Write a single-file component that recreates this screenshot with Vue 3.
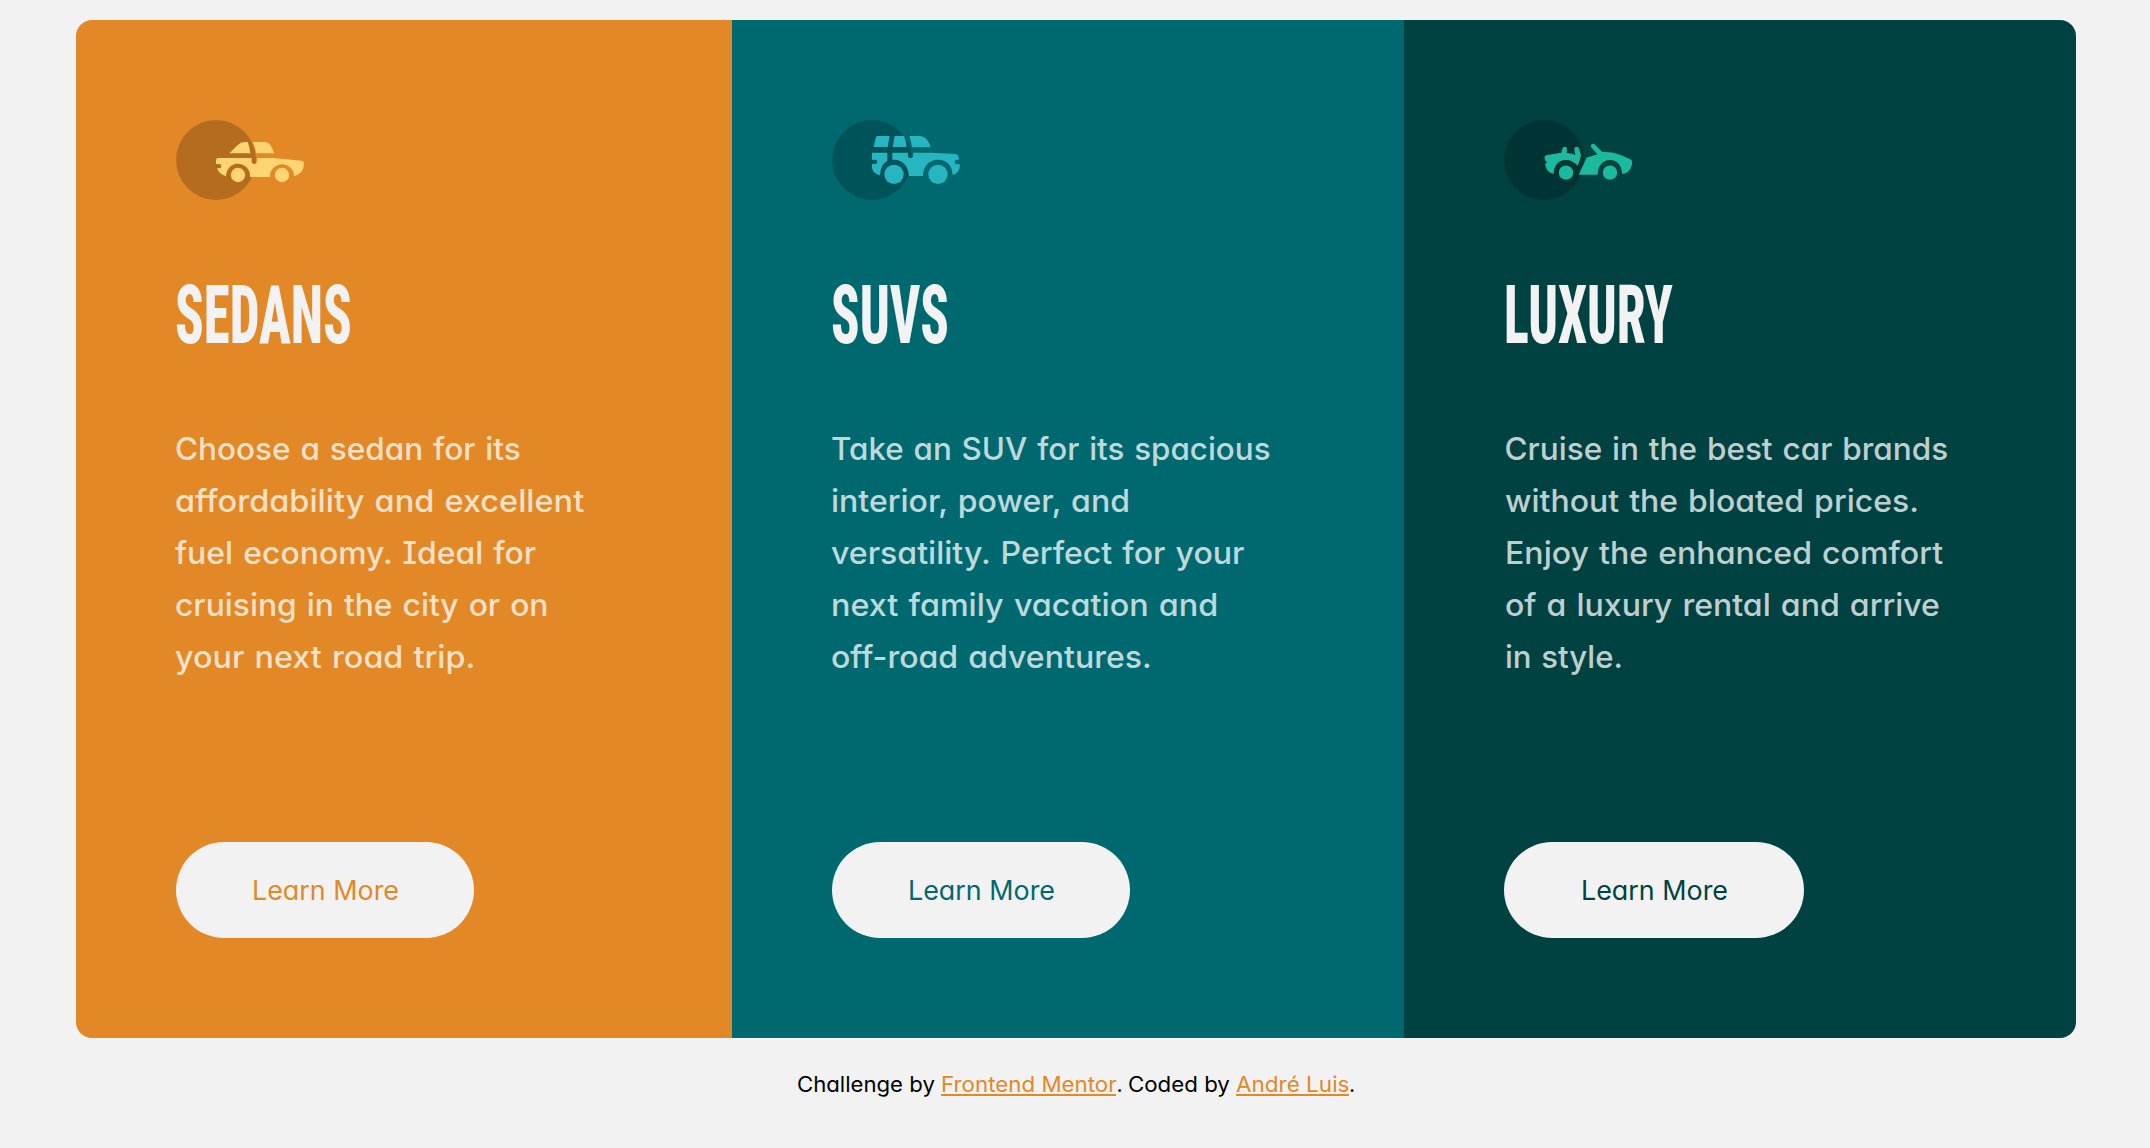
<script setup>
const cards = [
  {
    id: 'sedans',
    title: 'SEDANS',
    titleWidth: 177,
    view: '48 30 384 240',
    circle: 168,
    shapes: [
      'M208 130L234 104Q242 96 254 96H263Q269 110 271 130Z',
      'M278 96H312Q326 96 333 108L343 130H288Q286 110 278 96Z',
      'M174 144H275V154Q275 162 283 162Q291 162 291 154V144H340L425 152Q432 153 432 158Q432 190 402 199A36 36 0 0 0 330 199V201H270V195A36 36 0 0 0 198 199Q178 194 171 175H178Q184 174 184 168.500Q184 162 178 162H168V152Q168 144 174 144Z',
    ],
    wheels: [[234, 195, 21.5], [366, 195, 21.5]],
    lines: [
      ['Choose a sedan for its', 346],
      ['affordability and excellent', 409.5],
      ['fuel economy. Ideal for', 361],
      ['cruising in the city or on', 373.5],
      ['your next road trip.', 300.5],
    ],
  },
  {
    id: 'suvs',
    title: 'SUVS',
    titleWidth: 118,
    view: '36 30 384 240',
    circle: 156,
    shapes: [
      'M174 78H209L203 111H161L167 84Q169 78 174 78Z',
      'M224 78H252Q258 92 260 111H218Z',
      'M268 78H298Q314 78 323 92Q330 102 332 112H276Q273 92 268 78Z',
      'M156 128H202V153Q182 162 180 196Q160 192 156 174V162H166Q172 160 172 155.500Q172 149 166 149H156Z',
      'M217 128H264V137Q264 144 271 144Q279 144 279 137V128H333L408 132Q416 133 417 149H411Q404 150 404 156Q404 163 411 163H420Q420 190 398 195C397 166 380 149 354 149C328 149 309 168 309 198H267C265 168 248 149 222 149H217Z',
    ],
    wheels: [[222, 193, 29], [354, 193, 29]],
    lines: [
      ['Take an SUV for its spacious', 440],
      ['interior, power, and', 299],
      ['versatility. Perfect for your', 413.5],
      ['next family vacation and', 387],
      ['off-road adventures.', 320.5],
    ],
  },
  {
    id: 'luxury',
    title: 'LUXURY',
    titleWidth: 169,
    view: '42 30 384 240',
    circle: 162,
    shapes: [
      'M168 136L214 128L217 116Q219 110 224 110Q231 110 231 117L230 129Q243 130 256 134L253 118Q253 110 260 110Q267 110 268 118L273 136L270 148L263 167Q248 150 228 150C205 150 191 168 191 192Q169 187 165 162L171 157L165 151Q161 139 168 136Z',
      'M303 111C301 104 306 101 311 101Q315 102 318 107L337 126Q370 125 394 136L424 149Q428 156 425 167Q419 189 396 192C397 168 382 150 360 150C338 150 323 169 323 194H266L289 145Q291 141 296 141L322 133Z',
    ],
    wheels: [[228, 188, 21.5], [360, 188, 21.5]],
    lines: [
      ['Cruise in the best car brands', 444],
      ['without the bloated prices.', 414],
      ['Enjoy the enhanced comfort', 438],
      ['of a luxury rental and arrive', 434.5],
      ['in style.', 117.5],
    ],
  },
]

// Stretches or condenses a run of text to the given width.
const vFit = {
  mounted(el, { value }) {
    el.style.transform = `scaleX(${value / el.offsetWidth})`
    el.style.marginRight = `${value - el.offsetWidth}px`
  },
}
</script>

<template>
  <div class="page">
    <main class="cards">
      <section v-for="card in cards" :key="card.id" class="card" :class="card.id">
        <svg class="icon" :viewBox="card.view" aria-hidden="true">
          <circle class="halo" :cx="card.circle" cy="150" r="120" />
          <path v-for="d in card.shapes" :key="d" :d="d" />
          <circle v-for="w in card.wheels" :key="w[0]" :cx="w[0]" :cy="w[1]" :r="w[2]" />
        </svg>
        <h2><span v-fit="card.titleWidth" class="fit">{{ card.title }}</span></h2>
        <p>
          <span v-for="line in card.lines" :key="line[0]" class="line">
            <span v-fit="line[1]" class="fit">{{ line[0] }}</span>
          </span>
        </p>
        <a class="button"><span v-fit="147" class="fit">Learn More</span></a>
      </section>
    </main>
    <footer>
      <span v-fit="138" class="fit">Challenge by</span>
      <a class="first"><span v-fit="175.5" class="fit">Frontend Mentor</span></a>
      <span v-fit="6" class="fit">.</span>
      <span v-fit="101.5" class="fit coded">Coded by</span>
      <a class="second"><span v-fit="113" class="fit">André Luis</span></a>
      <span v-fit="6" class="fit">.</span>
    </footer>
  </div>
</template>

<style>
body {
  background: #f2f2f2;
}
</style>

<style scoped>
.page {
  box-sizing: border-box;
  height: 1148px;
  padding: 20px 74px 0 76px;
  background: #f2f2f2;
  font-family: Inter, "Noto Sans", sans-serif;
  font-feature-settings: "cv11", "cv08";
  overflow: hidden;
}
.cards {
  display: grid;
  grid-template-columns: 656px 672px 672px;
  height: 1018px;
  border-radius: 16px;
  overflow: hidden;
}
.card {
  box-sizing: border-box;
  display: flex;
  flex-direction: column;
  align-items: flex-start;
  padding: 100px;
}
.sedans { background: #e28826; color: #e28826; }
.suvs { background: #006970; color: #006970; }
.luxury { background: #004241; color: #004241; }
.icon {
  display: block;
  width: 128px;
  height: 80px;
}
.sedans .icon { fill: #ffd473; }
.suvs .icon { fill: #26b5c1; }
.luxury .icon { fill: #1bb99e; }
.icon .halo {
  fill: #000;
  fill-opacity: 0.2;
}
.fit {
  display: inline-block;
  transform-origin: 0 50%;
  white-space: nowrap;
}
h2 {
  margin: 67px 0 0 -1px;
  height: 96px;
  color: #f2f2f2;
  font-family: Roboto, sans-serif;
  font-size: 81.5px;
  font-weight: 800;
  font-stretch: 75%;
  line-height: 96px;
}
.luxury h2 { margin-left: 0; }
p {
  margin: 60px 0 0 -1px;
  color: rgba(255, 255, 255, 0.75);
  font-size: 31.5px;
  font-weight: 450;
  line-height: 52px;
  word-spacing: 1.5px;
}
.luxury p { margin-left: 0.5px; }
.line {
  display: block;
  height: 52px;
}
.button {
  box-sizing: border-box;
  display: flex;
  justify-content: center;
  width: 298px;
  height: 96px;
  margin-top: auto;
  border-radius: 48px;
  background: #f2f2f2;
  font-size: 26.5px;
  line-height: 97px;
}
.luxury .button { width: 300px; }
footer {
  display: flex;
  margin-top: 30px;
  padding-left: 720.5px;
  color: #000;
  font-size: 21.5px;
  line-height: 32px;
}
footer a {
  height: 26px;
  border-bottom: 2px solid #e28826;
  color: #e28826;
}
footer .first { margin-left: 6.5px; }
footer .coded { margin-left: 5px; }
footer .second { margin-left: 6px; }
</style>
